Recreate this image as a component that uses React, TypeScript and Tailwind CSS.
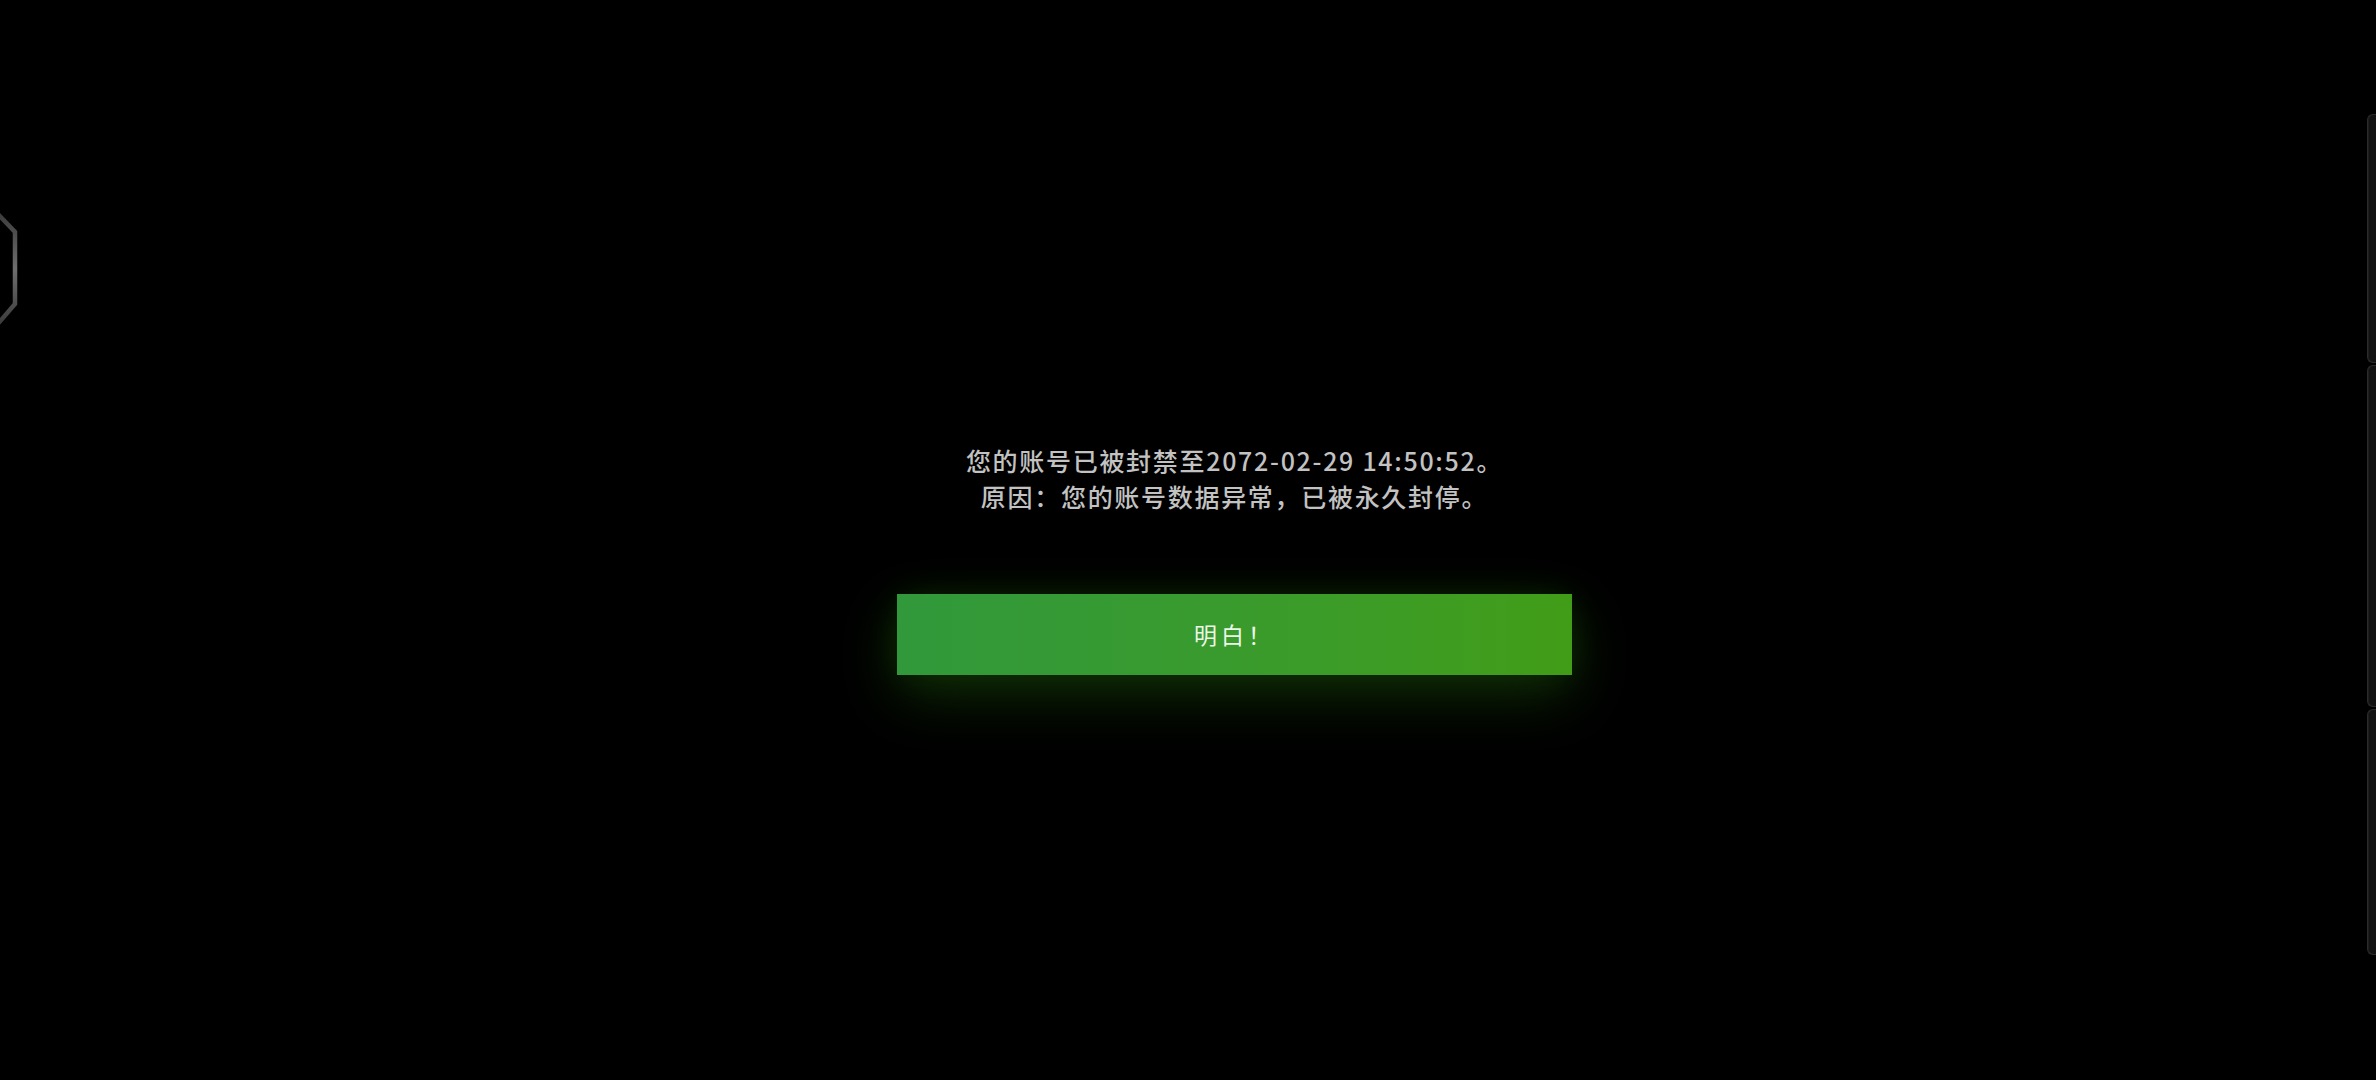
import React from "react";

const cjk = '"Noto Sans CJK SC", "Noto Sans", sans-serif';

function EdgeHex() {
  return (
    <svg
      className="absolute left-0 top-[204px]"
      width="30"
      height="140"
      viewBox="0 0 30 140"
      fill="none"
    >
      <defs>
        <linearGradient id="hexStroke" x1="0" y1="0" x2="0" y2="1">
          <stop offset="0" stopColor="#3a3a3a" />
          <stop offset="0.5" stopColor="#6e6e6e" />
          <stop offset="1" stopColor="#3a3a3a" />
        </linearGradient>
      </defs>
      <path
        d="M-4 8 L15 28 L15 100 L-4 122"
        stroke="url(#hexStroke)"
        strokeWidth="4.5"
        strokeLinejoin="miter"
      />
    </svg>
  );
}

function EdgeRail() {
  const seg =
    "rounded-l-[6px] border border-r-0 border-[#2b2b2b] bg-[#121212] shadow-[inset_1px_0_0_#1d1d1d]";
  return (
    <div className="absolute right-0 top-[114px] flex w-[9px] flex-col gap-[2px]">
      <div className={`${seg} h-[249px]`} />
      <div className={`${seg} h-[342px]`} />
      <div className={`${seg} h-[246px]`} />
    </div>
  );
}

export default function App() {
  return (
    <div className="relative h-[1080px] w-[2376px] overflow-hidden bg-black">
      <EdgeHex />
      <EdgeRail />
      <div className="flex h-full flex-col items-center pl-[93px] pt-[442px]">
        <div
          className="text-center text-[25px] font-medium leading-[36px] tracking-[1.7px] text-[#c2c2c2]"
          style={{ fontFamily: cjk }}
        >
          <p>您的账号已被封禁至2072-02-29 14:50:52。</p>
          <p>原因：您的账号数据异常，已被永久封停。</p>
        </div>
        <button
          className="mt-[80px] flex h-[81px] w-[675px] items-center justify-center bg-gradient-to-r from-[#31993b] to-[#419d17] text-[23px] tracking-[4px] text-[#eef6ea] shadow-[0_20px_60px_rgba(50,140,20,0.3),0_0_36px_rgba(50,140,20,0.16)]"
          style={{ fontFamily: cjk }}
        >
          明白！
        </button>
      </div>
    </div>
  );
}
